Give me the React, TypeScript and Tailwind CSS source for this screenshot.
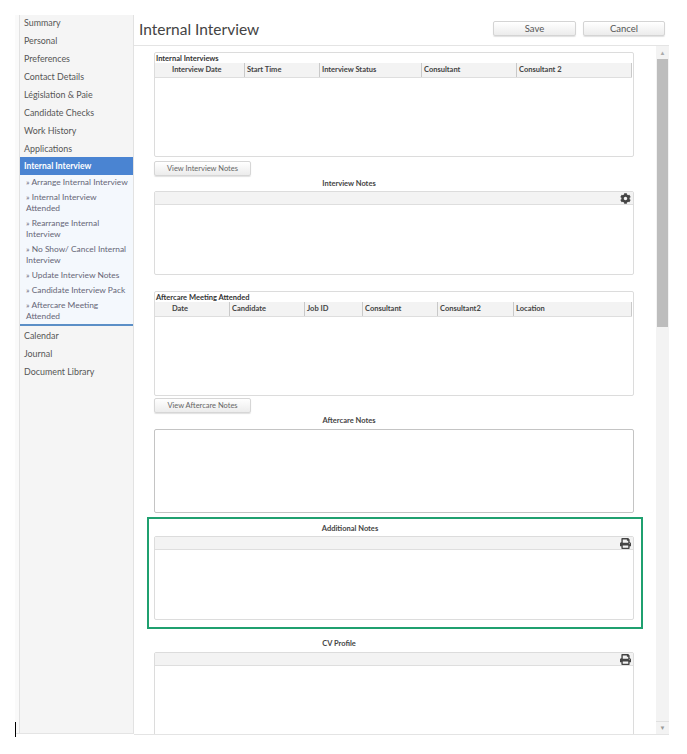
import { FaCog, FaPrint } from "react-icons/fa";

const topLinks = [
  "Summary",
  "Personal",
  "Preferences",
  "Contact Details",
  "Législation & Paie",
  "Candidate Checks",
  "Work History",
  "Applications",
];

const subLinks = [
  "» Arrange Internal Interview",
  "» Internal Interview Attended",
  "» Rearrange Internal Interview",
  "» No Show/ Cancel Internal Interview",
  "» Update Interview Notes",
  "» Candidate Interview Pack",
  "» Aftercare Meeting Attended",
];

const bottomLinks = ["Calendar", "Journal", "Document Library"];

function SideLink({ label }: { label: string }) {
  return <div className="h-[18px] pl-[4px] pt-[1px] text-[8.9px] leading-[18px] text-[#555]">{label}</div>;
}

function Sidebar() {
  return (
    <aside className="h-[719px] w-[119px] shrink-0 border-b border-[#e4e4e4] bg-[#fafafa] pl-1">
      <div className="h-full overflow-hidden border-x border-[#e2e2e2] bg-[#f5f5f5]">
        <div className="-mt-[2px]">
          {topLinks.map((label) => (
            <SideLink key={label} label={label} />
          ))}
          <div className="h-[18px] bg-[#4a84d2] pl-[4px] text-[8.5px] font-bold leading-[18px] text-white">
            Internal Interview
          </div>
          <ul className="border-b-2 border-[#5b8fc7] bg-[#f4f8fd] pl-[6px] pr-[3px]">
            {subLinks.map((label) => (
              <li key={label} className="py-[2px] text-[8.4px] leading-[11px] text-[#667]">
                {label}
              </li>
            ))}
          </ul>
          {bottomLinks.map((label) => (
            <SideLink key={label} label={label} />
          ))}
        </div>
      </div>
    </aside>
  );
}

function HeaderButton({ label, width }: { label: string; width: string }) {
  return (
    <button
      className={`h-[15px] ${width} rounded-[2px] border border-[#d4d4d4] bg-gradient-to-b from-white to-[#ececec] text-[9.5px] leading-[13px] text-[#555] shadow-[0_1px_1px_rgba(0,0,0,0.12)]`}
    >
      {label}
    </button>
  );
}

function SmallButton({ label }: { label: string }) {
  return (
    <button className="block h-[15px] w-[97px] rounded-[2px] border border-[#d6d6d6] bg-gradient-to-b from-white to-[#ececec] text-[7.5px] leading-[13px] text-[#666] shadow-[0_1px_1px_rgba(0,0,0,0.12)]">
      {label}
    </button>
  );
}

function SectionLabel({ label, className }: { label: string; className: string }) {
  return (
    <div className={`h-[10px] text-center text-[7.5px] font-bold text-[#444] ${className}`}>
      {label}
    </div>
  );
}

function TablePanel({
  title,
  columns,
  gridClass,
  className,
}: {
  title: string;
  columns: string[];
  gridClass: string;
  className: string;
}) {
  return (
    <section className={`h-[105px] w-[480px] rounded-[2px] border border-[#dcdcdc] bg-white ${className}`}>
      <div className="h-[10px] pl-[1px] text-[7.5px] font-bold leading-[11px] text-[#333]">{title}</div>
      <div className={`grid h-[15px] w-[477px] border-b border-[#dedede] bg-[#f3f3f3] ${gridClass}`}>
        {columns.map((col, i) => (
          <div
            key={col}
            className={`border-r border-[#c9c9c9] text-[7.5px] font-bold leading-[14px] text-[#444] ${
              i === 0 ? "pl-[17px]" : "pl-[2px]"
            }`}
          >
            {col}
          </div>
        ))}
      </div>
    </section>
  );
}

function NotesPanel({
  icon,
  height,
  className,
}: {
  icon: "gear" | "print";
  height: string;
  className: string;
}) {
  return (
    <section className={`${height} w-[480px] rounded-[2px] border border-[#dcdcdc] bg-white ${className}`}>
      <div className="flex h-[13px] items-center justify-end border-b border-[#dedede] bg-[#f3f3f3] pr-[2px]">
        {icon === "gear" ? (
          <FaCog className="text-[11px] text-[#444]" />
        ) : (
          <FaPrint className="text-[11px] text-[#444]" />
        )}
      </div>
    </section>
  );
}

function Scrollbar() {
  return (
    <div className="flex h-full w-[13px] shrink-0 flex-col bg-[#f3f3f3]">
      <div className="flex h-[13px] items-center justify-center text-[6px] leading-none text-[#aaa]">▲</div>
      <div className="mx-auto h-[268px] w-[11px] bg-[#bdbdbd]" />
      <div className="flex-1" />
      <div className="flex h-[13px] items-center justify-center border-t border-[#e0e0e0] text-[6px] leading-none text-[#999]">
        ▼
      </div>
    </div>
  );
}

export default function App() {
  return (
    <div className="relative h-[754px] w-[687px] overflow-hidden bg-white font-['Lato',sans-serif]">
      <div className="flex pl-[15px] pt-[15px]">
        <Sidebar />
        <main className="h-[720px] w-[535px] shrink-0 border-b border-[#e4e4e4]">
          <header className="flex h-[31px] items-start justify-between border-b border-[#e4e4e4] pl-[5px] pr-[4px] pt-[6px]">
            <h1 className="text-[15.5px] font-normal leading-[16px] text-[#444]">Internal Interview</h1>
            <div className="flex gap-[7px]">
              <HeaderButton label="Save" width="w-[83px]" />
              <HeaderButton label="Cancel" width="w-[82px]" />
            </div>
          </header>
          <div className="flex h-[688px] justify-between overflow-hidden">
            <div className="pl-[20px] pt-[6px]">
              <TablePanel
                title="Internal Interviews"
                columns={["Interview Date", "Start Time", "Interview Status", "Consultant", "Consultant 2"]}
                gridClass="grid-cols-[90px_75px_102px_95px_115px]"
                className=""
              />
              <div className="mt-[4px]">
                <SmallButton label="View Interview Notes" />
              </div>
              <SectionLabel label="Interview Notes" className="mt-[2px] w-[390px] leading-[12px]" />
              <NotesPanel icon="gear" height="h-[84px]" className="mt-[3px]" />
              <TablePanel
                title="Aftercare Meeting Attended"
                columns={["Date", "Candidate", "Job ID", "Consultant", "Consultant2", "Location"]}
                gridClass="grid-cols-[75px_75px_58px_75px_76px_118px]"
                className="mt-[16px]"
              />
              <div className="mt-[2px]">
                <SmallButton label="View Aftercare Notes" />
              </div>
              <SectionLabel label="Aftercare Notes" className="mt-[2px] w-[390px] leading-[12px]" />
              <div className="mt-[4px] h-[84px] w-[480px] rounded-[2px] border border-[#c4c4c4] bg-white" />
              <div className="-ml-[7px] mt-[4px] w-[496px] border-2 border-[#1fa06f] pb-[7px] pl-[5px] pr-[7px] pt-[3px]">
                <SectionLabel label="Additional Notes" className="w-[392px] leading-[14px]" />
                <NotesPanel icon="print" height="h-[84px]" className="mt-[4px]" />
              </div>
              <SectionLabel label="CV Profile" className="mt-[8px] w-[370px] leading-[14px]" />
              <NotesPanel icon="print" height="h-[110px]" className="mt-[5px]" />
            </div>
            <Scrollbar />
          </div>
        </main>
      </div>
      {/* text cursor left over in the capture */}
      <div className="absolute left-[15px] top-[722px] h-[15px] w-px bg-black" />
    </div>
  );
}
